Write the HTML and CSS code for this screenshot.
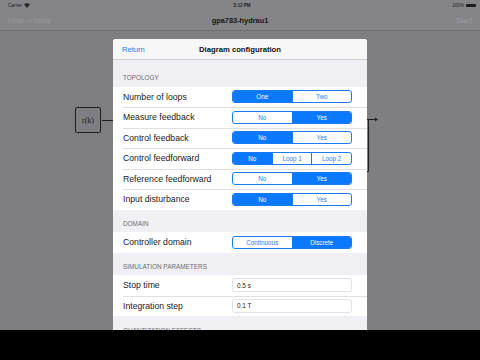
FILE: index.html
```html
<!DOCTYPE html>
<html lang="en">
<head>
    <meta charset="UTF-8">
    <meta name="viewport" content="width=device-width, initial-scale=1.0">
    <title>gpa783-hydrau1</title>
    <link rel="stylesheet" href="styles.css">
</head>
<body>
    <div class="status">
        <span class="carrier">Carrier <svg width="6" height="5" viewBox="0 0 6 5"><path d="M0 1.6 A4.2 4.2 0 0 1 6 1.6 L3 5 Z" fill="#2a2a2c"/></svg></span>
        <span class="clock">3:12 PM</span>
        <span class="battery">100% <span class="batt"></span></span>
    </div>
    <div class="navbar">
        <span class="nav-left">Final -&gt; Initial</span>
        <span class="nav-title">gpa783-hydrau1</span>
        <span class="nav-right">Start</span>
    </div>
    <div class="stage">
        <div class="block">r(k)</div>
        <svg class="wires" width="480" height="300" viewBox="0 0 480 300">
            <path d="M102 89.5 H114" stroke="#1e1e20" stroke-width="1" fill="none"/>
            <path d="M366 88.5 H375" stroke="#1e1e20" stroke-width="1" fill="none"/>
            <path d="M375 86.5 L378 88.5 L375 90.5 Z" fill="#1e1e20"/>
            <path d="M368.5 88.5 V140.5 H366" stroke="#1e1e20" stroke-width="1" fill="none"/>
        </svg>
    </div>
    <div class="dock"></div>

    <div class="modal">
        <div class="modal-head">
            <span class="back">Return</span>
            <span class="modal-title">Diagram configuration</span>
        </div>
        <div class="modal-body">
            <div class="section first">Topology</div>
            <div class="group">
                <div class="row">
                    <span class="label">Number of loops</span>
                    <div class="seg"><span class="on">One</span><span>Two</span></div>
                </div>
                <div class="row">
                    <span class="label">Measure feedback</span>
                    <div class="seg"><span>No</span><span class="on">Yes</span></div>
                </div>
                <div class="row">
                    <span class="label">Control feedback</span>
                    <div class="seg"><span class="on">No</span><span>Yes</span></div>
                </div>
                <div class="row">
                    <span class="label">Control feedforward</span>
                    <div class="seg"><span class="on">No</span><span>Loop 1</span><span>Loop 2</span></div>
                </div>
                <div class="row">
                    <span class="label">Reference feedforward</span>
                    <div class="seg"><span>No</span><span class="on">Yes</span></div>
                </div>
                <div class="row">
                    <span class="label">Input disturbance</span>
                    <div class="seg"><span class="on">No</span><span>Yes</span></div>
                </div>
            </div>

            <div class="section">Domain</div>
            <div class="group">
                <div class="row">
                    <span class="label">Controller domain</span>
                    <div class="seg"><span>Continuous</span><span class="on">Discrete</span></div>
                </div>
            </div>

            <div class="section">Simulation parameters</div>
            <div class="group">
                <div class="row">
                    <span class="label">Stop time</span>
                    <div class="field">0.5 s</div>
                </div>
                <div class="row">
                    <span class="label">Integration step</span>
                    <div class="field">0.1 T</div>
                </div>
            </div>

            <div class="section">Quantization effects</div>
        </div>
    </div>
</body>
</html>
```

FILE: styles.css
```css
body {
    margin: 0;
    width: 480px;
    height: 360px;
    overflow: hidden;
    position: relative;
    display: flex;
    flex-direction: column;
    background-color: #7f7f83;
    font-family: 'Liberation Sans', Arial, sans-serif;
}
.status {
    height: 10px;
    display: flex;
    align-items: center;
    justify-content: space-between;
    padding: 0 4px 0 8px;
    font-size: 4.6px;
    color: #1e1e20;
    background-color: #858589;
}
.carrier {
    width: 60px;
    display: flex;
    align-items: center;
    gap: 2px;
}
.clock {
    font-weight: bold;
}
.battery {
    width: 60px;
    display: flex;
    align-items: center;
    justify-content: flex-end;
    gap: 2px;
}
.batt {
    width: 10px;
    height: 3px;
    background-color: #1e1e20;
    border-radius: 1px;
}
.navbar {
    height: 20px;
    display: flex;
    align-items: center;
    justify-content: space-between;
    padding: 0 8px;
    background-color: #858589;
    border-bottom: 1px solid #707074;
}
.nav-left {
    width: 80px;
    font-size: 7.2px;
    color: #99999c;
}
.nav-title {
    font-size: 7.4px;
    font-weight: bold;
    color: #151517;
}
.nav-right {
    width: 80px;
    text-align: right;
    font-size: 7.6px;
    color: #9b9b9e;
}
.stage {
    flex: 1;
    position: relative;
}
.block {
    position: absolute;
    left: 75px;
    top: 76px;
    width: 26px;
    height: 26px;
    box-sizing: border-box;
    border: 1px solid #1e1e20;
    border-radius: 2px;
    display: flex;
    align-items: center;
    justify-content: center;
    font-family: 'Liberation Serif', 'Times New Roman', serif;
    font-size: 8px;
    color: #1e1e20;
}
.wires {
    position: absolute;
    left: 0;
    top: 0;
}
.dock {
    height: 30px;
    background-color: #000;
}
.modal {
    position: absolute;
    left: 113px;
    top: 39px;
    width: 254px;
    height: 291px;
    overflow: hidden;
    border-radius: 3px 3px 0 0;
    background-color: #efeff4;
}
.modal-head {
    height: 20px;
    position: relative;
    display: flex;
    align-items: center;
    justify-content: center;
    background-color: #f7f7f8;
    border-bottom: 1px solid #cfced3;
}
.back {
    position: absolute;
    left: 9px;
    font-size: 7.6px;
    color: #1a7cf0;
}
.modal-title {
    font-size: 7.7px;
    font-weight: bold;
    color: #111;
}
.section {
    height: 22.5px;
    box-sizing: border-box;
    padding: 0 10px 5px;
    display: flex;
    align-items: flex-end;
    font-size: 6.4px;
    text-transform: uppercase;
    color: #6d6d72;
}
.section.first {
    height: 26.5px;
    padding-bottom: 6px;
}
.group {
    background-color: #fff;
}
.row {
    height: 20.5px;
    position: relative;
    display: flex;
    align-items: center;
    justify-content: space-between;
    padding: 0 15px 0 10px;
}
.row + .row::before {
    content: "";
    position: absolute;
    left: 10px;
    right: 0;
    top: 0;
    height: 1px;
    background-color: #e0e0e4;
}
.label {
    font-size: 8.7px;
    color: #1a1a1a;
}
.seg {
    width: 120px;
    height: 13px;
    box-sizing: border-box;
    display: flex;
    border: 1px solid #1a7cf0;
    border-radius: 3px;
    overflow: hidden;
}
.seg span {
    flex: 1;
    display: flex;
    align-items: center;
    justify-content: center;
    font-size: 6.3px;
    color: #1a7cf0;
}
.seg span + span {
    border-left: 1px solid #1a7cf0;
}
.seg span.on {
    background-color: #0a78ff;
    color: #fff;
}
.field {
    width: 120px;
    height: 14px;
    box-sizing: border-box;
    padding-left: 4px;
    display: flex;
    align-items: center;
    border: 1px solid #e2e2e6;
    border-radius: 3px;
    font-size: 6.4px;
    color: #222;
}
```
